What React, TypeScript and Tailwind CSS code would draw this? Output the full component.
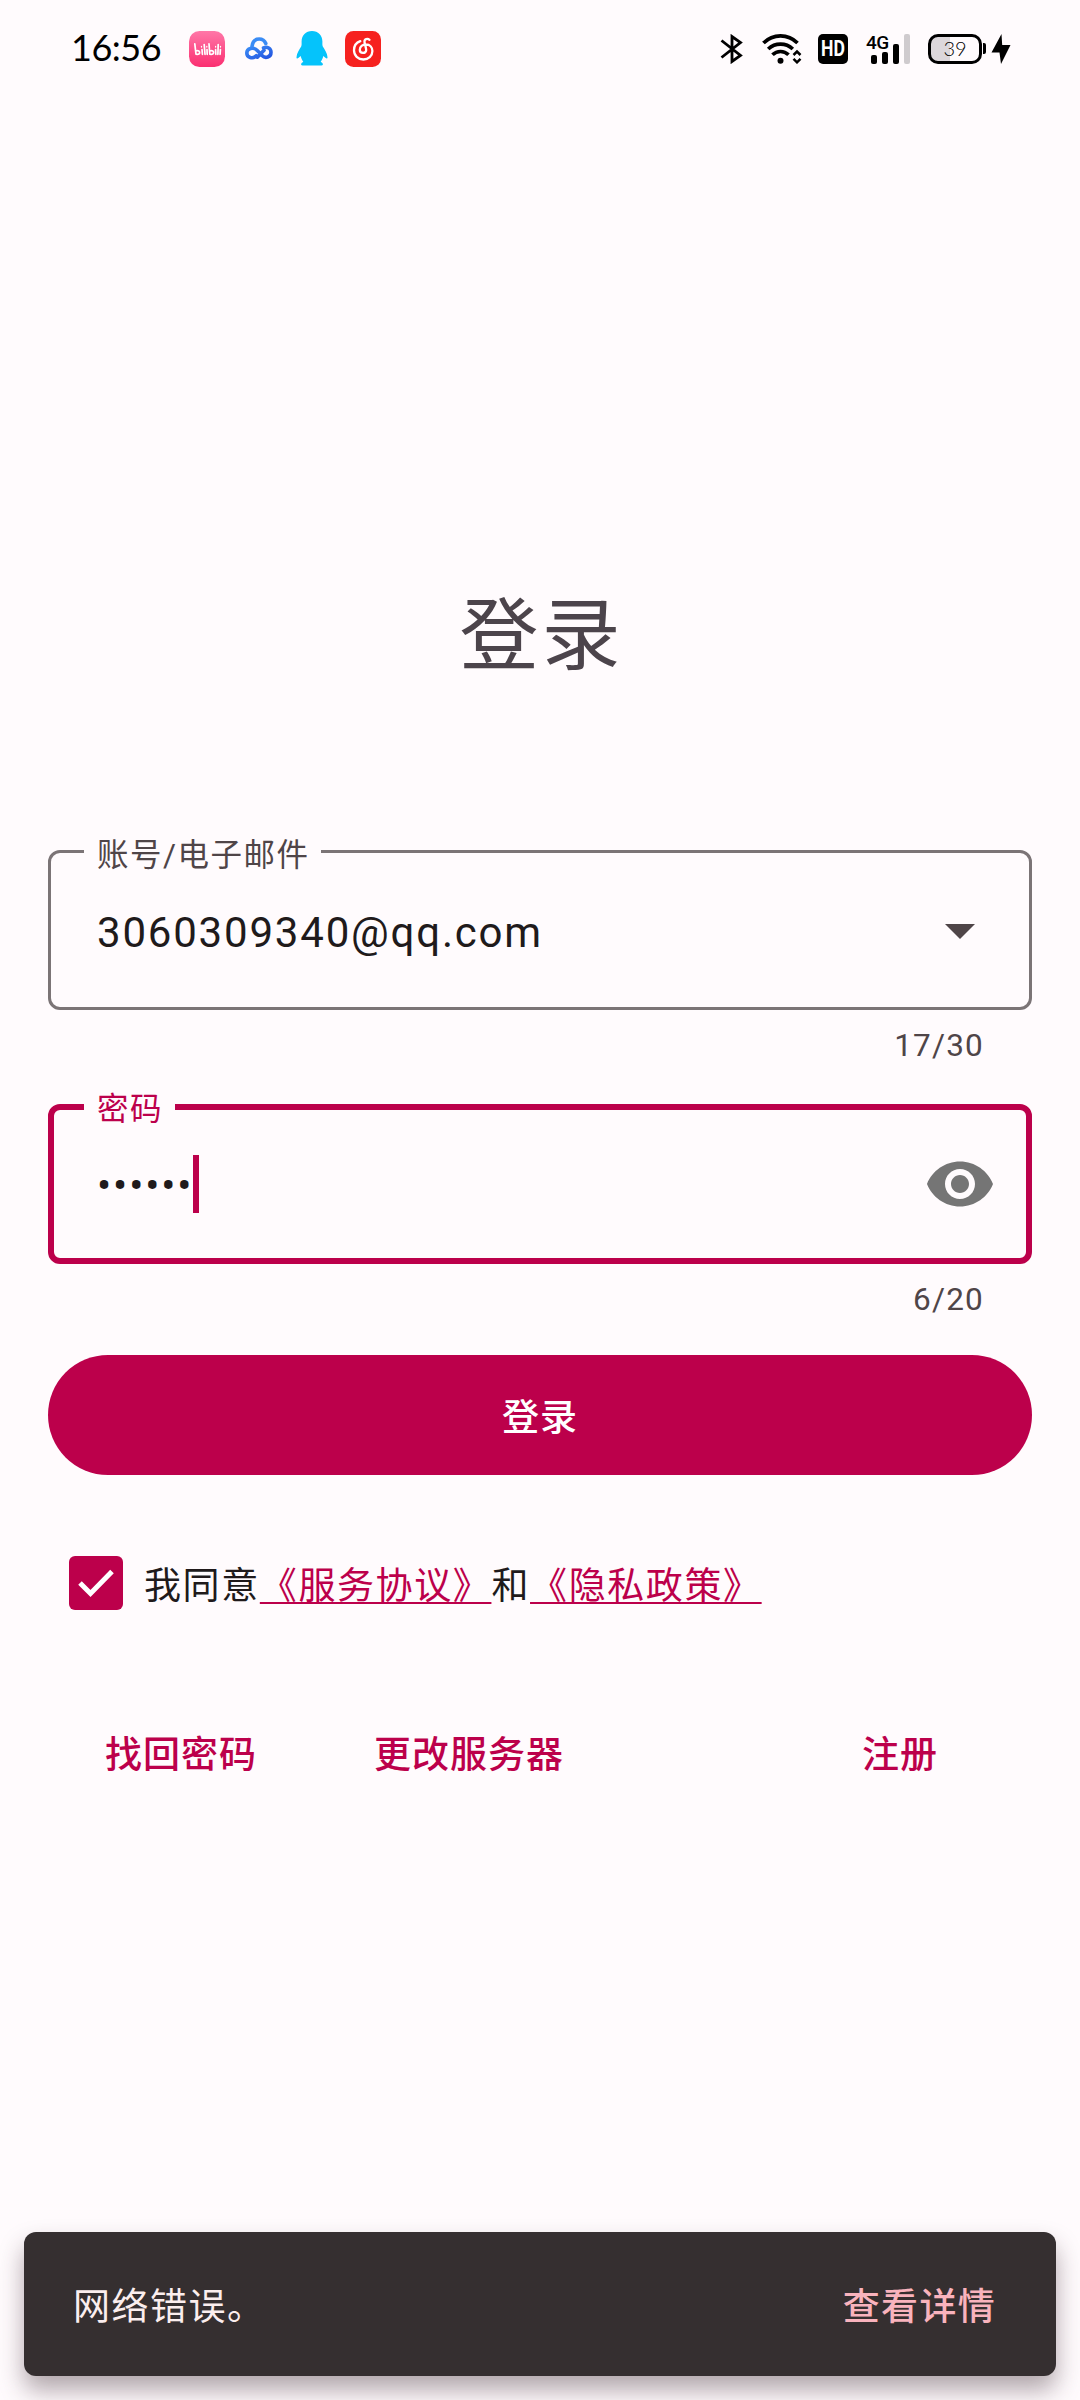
import React from "react";

function BilibiliLogo() {
  return (
    <svg width="36" height="36" viewBox="0 0 36 36">
      <defs>
        <linearGradient id="bili" x1="0" y1="0" x2="0" y2="1">
          <stop offset="0" stopColor="#ff77a8" />
          <stop offset="1" stopColor="#fb2f71" />
        </linearGradient>
      </defs>
      <rect width="36" height="36" rx="10.5" fill="url(#bili)" />
      <g stroke="#fff" strokeLinecap="round" strokeLinejoin="round" fill="none">
        <g strokeWidth="1.7">
          <path d="M5.8 12.8 7 23.2q4 .6 3.6-2.2-.8-2-3.8-1" />
          <path d="M13 18.5l.4 4.8M15.2 13.5l.8 9.8M18 18.5l.2 4.8" />
          <path d="M20 12.8l.8 10.4q4 .6 3.8-2.2-.8-2-3.8-1" />
          <path d="M26.6 18.5l.2 4.8M29.2 13.5l-.3 9.8M31.4 18.5l-.3 4.8" />
        </g>
        <path strokeWidth="1.3" d="M12.5 15.4v.6M17.8 15.4v.6M26.6 15.4v.6M31.5 15.4v.6" />
      </g>
    </svg>
  );
}

function CloudLogo() {
  return (
    <svg width="28" height="24" viewBox="0 0 28 24" fill="none" strokeLinecap="round">
      <defs>
        <linearGradient id="cloud" x1="0" y1="0" x2="1" y2="1">
          <stop offset="0" stopColor="#3b8cf5" />
          <stop offset="1" stopColor="#2454e0" />
        </linearGradient>
      </defs>
      <path d="M7 9.5C7.500 4.500 10.500 2 14.200 2c3 0 5.500 1.700 6.600 4.500" stroke="#3b8cf5" strokeWidth="3.600" />
      <path
        d="M18.500 10.800c3.800-1.600 7.500.6 7.500 4.400 0 5-5.600 6.800-9 3.300L15.600 17M12.300 20.200 19 13.200M14 15.300 12 13.300c-3.600-3.600-10.200-2-10.200 2.600 0 4.600 6 6.600 9.500 2.800"
        stroke="url(#cloud)"
        strokeWidth="3.600"
      />
    </svg>
  );
}

function PenguinLogo() {
  return (
    <svg width="32" height="35" viewBox="0 0 32 35" fill="#05c3fb">
      <path d="M16 0C9.800 0 5.600 4.600 5.600 10.500c0 2 .2 3.500-.4 5C3.500 18.500.6 22 .5 26.200c0 1.600.9 1.700 1.800.9l2.400-2c.4 2.200 1.400 4.200 2.600 5.700-1.500.9-2.200 1.700-2.200 2.600 0 .8 1 1.100 2.300 1.100h17.200c1.300 0 2.300-.3 2.300-1.100 0-.9-.7-1.700-2.200-2.600 1.200-1.500 2.200-3.500 2.600-5.700l2.400 2c.9.800 1.800.7 1.800-.9-.1-4.200-3-7.700-4.700-10.700-.6-1.500-.4-3-.4-5C26.400 4.600 22.200 0 16 0Z" />
    </svg>
  );
}

function NetEaseLogo() {
  return (
    <svg width="36" height="36" viewBox="0 0 36 36" fill="none">
      <rect width="36" height="36" rx="8.500" fill="#f6211f" />
      <path
        d="M24.500 8.800c-1.800-1.500-5.300-1-5 2 .2 2 1.700 6.200 1.700 8.200 0 4-6.400 4-6.400-.3 0-3.300 2.800-5.200 6-5.200 4.300 0 6.600 3 6.600 6.500 0 5-4 8.500-9 8.500-5.400 0-9.400-4-9.400-9.300 0-4.200 2.400-7.600 6.300-9"
        stroke="#fff"
        strokeWidth="2.300"
        strokeLinecap="round"
      />
    </svg>
  );
}

function Bluetooth() {
  return (
    <svg width="24" height="30" viewBox="0 0 24 30" fill="none" stroke="#000" strokeWidth="2.800">
      <path d="M1.500 6.500 20.500 21.500 12 27.500V2.500l8.500 6L1.500 23.500" />
    </svg>
  );
}

function Wifi() {
  return (
    <svg width="40" height="30" viewBox="0 0 40 30" fill="none" stroke="#000">
      <path d="M1.500 9C11-.5 26-.5 35.500 9" strokeWidth="3.700" />
      <path d="M6.200 15c7-6.600 17.600-6.600 24.600 0" strokeWidth="3.700" />
      <path d="M10.500 20.800c4.500-4.400 11.500-4.400 16 0" strokeWidth="3.700" />
      <circle cx="18.500" cy="26.800" r="3" fill="#000" stroke="none" />
      <path d="m31.500 21 3.500-3.500 3.500 3.500M31.500 24.800l3.500 3.500 3.500-3.500" strokeWidth="2.500" />
    </svg>
  );
}

function StatusBar() {
  return (
    <header className="flex h-24 items-center pt-px pl-[71px]">
      <div className="w-[118px] pb-[3px] font-['Lato'] text-[36px] leading-none tracking-[-0.5px] text-black">16:56</div>
      <div className="flex items-center">
        <BilibiliLogo />
        <div className="ml-5"><CloudLogo /></div>
        <div className="ml-[23px]"><PenguinLogo /></div>
        <div className="ml-[17px]"><NetEaseLogo /></div>
      </div>
      <div className="ml-[339px] flex h-[30px] items-center">
        <Bluetooth />
        <div className="ml-[18px]"><Wifi /></div>
        <div className="ml-4 flex h-[30px] w-[30px] items-center justify-center rounded-[5px] bg-black font-['Roboto'] text-[22px] leading-none font-bold text-white">
          <span className="scale-x-80">HD</span>
        </div>
        <div className="relative ml-[23px] flex h-[30px] w-[39px] items-end gap-[5px]">
          <span className="absolute -top-px -left-[5px] font-['Roboto'] text-[19px] leading-none font-medium tracking-[-0.5px] text-black">4G</span>
          <i className="h-[9px] w-[6px] rounded-[2px] bg-black" />
          <i className="h-3 w-[6px] rounded-[2px] bg-black" />
          <i className="h-5 w-[6px] rounded-[2px] bg-black" />
          <i className="h-[30px] w-[6px] rounded-[2px] bg-[#cfcbce]" />
        </div>
        <div className="ml-[18px] flex h-[30px] w-[54px] items-center justify-center rounded-[10px] border-3 border-black bg-linear-to-r from-[#dcd7db] from-39% to-transparent to-39% pb-px font-['Lato'] text-[20px] leading-none font-light text-black">
          39
        </div>
        <i className="ml-px h-[11px] w-[3px] rounded-r-[2px] bg-black" />
        <svg className="ml-[5px]" width="20" height="30" viewBox="0 0 20 30">
          <path d="M10.500 0 .5 18.500h8L10 30 19.500 11h-8.300z" />
        </svg>
      </div>
    </header>
  );
}

export default function App() {
  return (
    <div className="flex h-[2400px] w-[1080px] flex-col overflow-hidden bg-[#fffbfd] font-['Roboto','Noto_Sans_CJK_SC',sans-serif]">
      <StatusBar />
      <h1 className="mt-[495px] h-[92px] pl-[3px] text-center text-[79px] leading-[92px] tracking-[3px] text-[#4c444b]">登录</h1>

      <main className="mt-[167px] flex flex-col px-12">
        <div className="relative flex h-40 items-center rounded-xl border-3 border-[#7b7476] pl-[46px]">
          <label className="absolute -top-[16px] left-[33px] h-[38px] w-[237px] bg-[#fffbfd] pl-[13px] text-[31.5px] leading-[38px] tracking-[1.5px] whitespace-nowrap text-[#4f4548]">
            账号/电子邮件
          </label>
          <span className="flex-1 pt-[5px] text-[42px] leading-none tracking-[1.8px] text-[#201a1b]">3060309340@qq.com</span>
          <svg className="mr-[33px]" width="72" height="72" viewBox="0 0 24 24" fill="#4f4548">
            <path d="m7 10 5 5 5-5z" />
          </svg>
        </div>
        <div className="mt-[17px] h-[77px] pr-12 text-right text-[31.5px] leading-[38px] tracking-[1.2px] text-[#4f4548]">17/30</div>

        <div className="relative flex h-40 items-center rounded-xl border-6 border-[#bc004b] pl-[43px]">
          <label className="absolute -top-[19px] left-[30px] h-[38px] w-[91px] bg-[#fffbfd] pl-[13px] text-[31.5px] leading-[38px] tracking-[1.5px] text-[#bc004b]">
            密码
          </label>
          <span className="pt-1 text-[42px] leading-none tracking-[1.9px] text-[#201a1b]">••••••</span>
          <i className="h-[58px] w-[6px] bg-[#bc004b]" />
          <svg className="mr-[30px] ml-auto" width="72" height="72" viewBox="0 0 24 24" fill="#757575">
            <path d="M12 4.500C7 4.500 2.730 7.610 1 12c1.730 4.390 6 7.500 11 7.500s9.270-3.110 11-7.500c-1.730-4.390-6-7.500-11-7.500zM12 17c-2.760 0-5-2.240-5-5s2.240-5 5-5 5 2.240 5 5-2.240 5-5 5zm0-8c-1.660 0-3 1.340-3 3s1.340 3 3 3 3-1.340 3-3-1.340-3-3-3z" />
          </svg>
        </div>
        <div className="mt-[17px] h-[74px] pr-12 text-right text-[31.5px] leading-[38px] tracking-[1.2px] text-[#4f4548]">6/20</div>

        <button className="flex h-[120px] items-center justify-center rounded-full bg-[#bc004b] pt-[7px] text-[37px] font-medium tracking-[1px] text-white">
          登录
        </button>

        <div className="mt-[81px] flex h-[54px] items-center pl-[21px]">
          <div className="flex h-[54px] w-[54px] items-center justify-center rounded-md bg-[#bc004b]">
            <svg width="38" height="30" viewBox="0 0 38 30" fill="none" stroke="#fff" strokeWidth="5">
              <path d="m3 15 10.500 10.500L35 3.500" />
            </svg>
          </div>
          <p className="pt-[7px] pl-[21px] text-[37px] leading-[54px] tracking-[1.6px] whitespace-nowrap text-[#201a1b]">
            我同意
            <a className="text-[#bc004b] underline decoration-2 underline-offset-[3px] [text-decoration-skip-ink:none]">《服务协议》</a>
            和
            <a className="text-[#bc004b] underline decoration-2 underline-offset-[3px] [text-decoration-skip-ink:none]">《隐私政策》</a>
          </p>
        </div>

        <nav className="mt-[118px] flex h-14 items-center pl-[57px] text-[37px] font-medium tracking-[1px] text-[#bc004b]">
          <a className="w-[269px]">找回密码</a>
          <a className="w-[488px]">更改服务器</a>
          <a>注册</a>
        </nav>
      </main>

      <div className="mx-6 mt-auto mb-6 flex h-36 shrink-0 items-center justify-between rounded-xl bg-[#352f30] pr-[60px] pl-[49px] text-[37px] tracking-[1.300px] shadow-[0_14px_24px_rgba(50,30,40,0.38)]">
        <span className="pt-[7px] tracking-[1.500px] text-[#fbeeee]">网络错误。</span>
        <button className="pt-[7px] font-medium text-[#f9b3bd]">查看详情</button>
      </div>
    </div>
  );
}
